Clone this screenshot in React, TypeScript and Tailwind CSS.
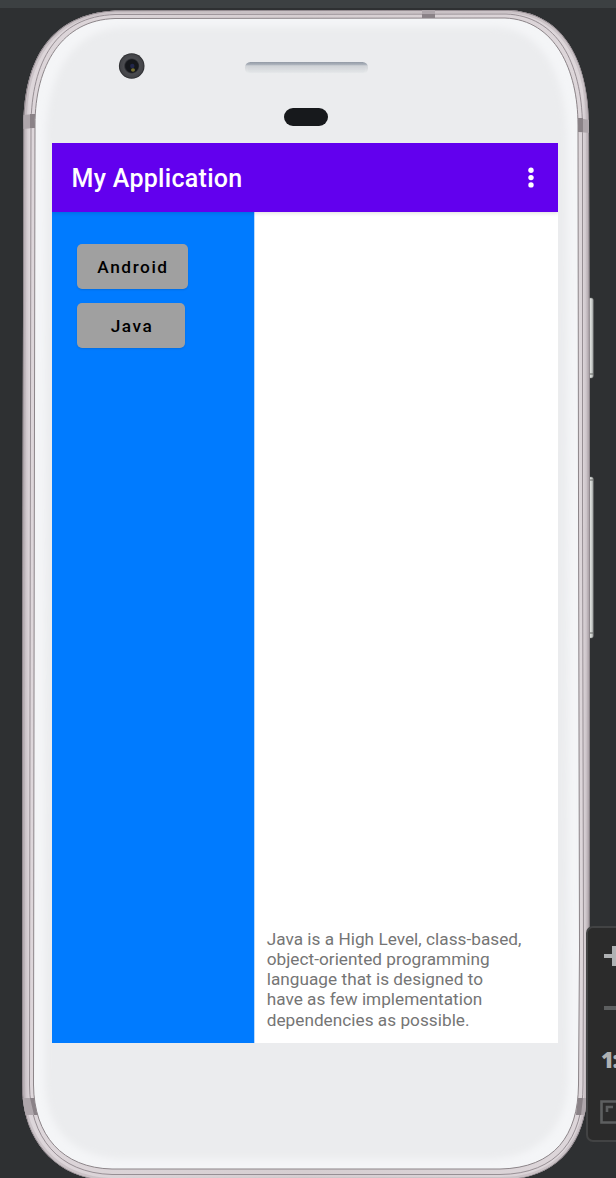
import React from "react";

const OUTER =
  "M23.5 125 C24 60 50 14 115 10.5 L508 10 C560 12 587 55 589 120 L590 500 L589.5 950 L587.5 1085 C588 1140 560 1180 500 1180 L110 1181 C55 1179 22 1140 22 1085 L22 700 Z";
const RIM =
  "M31 125 C31.5 62 56 16.5 115 14.5 L506 14 C557 16 581.5 62 582.5 125 L582.5 500 L583.5 950 L583 1085 C583 1138 558 1174 500 1174.5 L112 1174.5 C58 1173 30 1137 29.5 1085 L30 700 Z";
const FACE =
  "M35 125 C35 65 62 20 115 18.5 L505 18 C555 20 578 70 578 125 L578.5 500 L579.5 950 L578.5 1085 C578 1135 555 1168 500 1169 L112 1169 C62 1168 34 1135 33.5 1085 L34 700 Z";

function DeviceFrame() {
  return (
    <svg className="absolute inset-0" width="616" height="1178" viewBox="0 0 616 1178" aria-hidden="true">
      <defs>
        <linearGradient id="metal" x1="22" x2="590" y1="0" y2="0" gradientUnits="userSpaceOnUse">
          <stop offset="0" stopColor="#a39ba0" />
          <stop offset="0.006" stopColor="#cbc3c8" />
          <stop offset="0.013" stopColor="#ddd6da" />
          <stop offset="0.5" stopColor="#d6ced1" />
          <stop offset="0.987" stopColor="#ddd6da" />
          <stop offset="0.995" stopColor="#c9c1c6" />
          <stop offset="1" stopColor="#928a90" />
        </linearGradient>
        <linearGradient id="key" x1="0" x2="1" y1="0" y2="0">
          <stop offset="0" stopColor="#9b9d9c" />
          <stop offset="0.5" stopColor="#dfe2df" />
          <stop offset="1" stopColor="#a5a8a7" />
        </linearGradient>
        <linearGradient id="speaker" x1="0" x2="0" y1="0" y2="1">
          <stop offset="0" stopColor="#929aa5" />
          <stop offset="0.22" stopColor="#adb3bc" />
          <stop offset="0.32" stopColor="#d0d3d7" />
          <stop offset="1" stopColor="#eceeef" />
        </linearGradient>
        <pattern id="mesh" width="2" height="2" patternUnits="userSpaceOnUse">
          <circle cx="1" cy="1" r="0.5" fill="#c0c4c8" />
        </pattern>
        <radialGradient id="lens">
          <stop offset="0" stopColor="#11131b" />
          <stop offset="0.5" stopColor="#202126" />
          <stop offset="0.62" stopColor="#4b4c50" />
          <stop offset="0.88" stopColor="#434448" />
          <stop offset="1" stopColor="#252629" />
        </radialGradient>
        <filter id="soft" x="-5%" y="-5%" width="110%" height="110%">
          <feGaussianBlur stdDeviation="3.5" />
        </filter>
        <clipPath id="outerClip"><path d={OUTER} /></clipPath>
        <clipPath id="faceClip"><path d={FACE} /></clipPath>
      </defs>
      <rect x="588" y="298" width="5.3" height="80" rx="2" fill="url(#key)" stroke="#777979" strokeWidth="0.5" />
      <rect x="588" y="477" width="5.3" height="161" rx="2" fill="url(#key)" stroke="#777979" strokeWidth="0.5" />
      <path d="M589 480h4M589 633h4M589 374h4" stroke="#646665" strokeWidth="1" />
      <path d={OUTER} fill="url(#metal)" />
      <g clipPath="url(#outerClip)">
        <path d={OUTER} fill="none" stroke="#b5adb2" strokeWidth="6" opacity="0.45" />
        <path d={OUTER} fill="none" stroke="#8b8288" strokeWidth="1.4" />
        <path d={RIM} fill="none" stroke="#8f878c" strokeWidth="0.9" />
        <path d="M22 115l12-1v14l-12 1zM578 118l12 2v13l-12-1zM422 9h13v9h-13zM22 1098h12l4 17H22zM578 1098h13v17h-15z" fill="#aea6ab" />
        <path d="M30 114h5v14h-5zM578 118h5v14h-5zM422 14h13v4h-13zM30 1098h5l3 17h-4zM578 1098h5l-2 17h-5z" fill="#8a8287" />
      </g>
      <path d={FACE} fill="#f4f5f7" stroke="#8c8589" strokeWidth="1" />
      <g clipPath="url(#faceClip)">
        <path
          filter="url(#soft)"
          fill="#ebecee"
          d="M46 140 C46 75 72 29 125 27 L495 27 C545 29 566 80 567 135 L568 1080 C567 1127 540 1157 492 1159 L120 1159 C72 1157 45 1128 45 1080Z"
        />
      </g>
      <circle cx="131.7" cy="66" r="12.8" fill="url(#lens)" />
      <circle cx="132" cy="66" r="6.5" fill="#15171b" />
      <circle cx="132.3" cy="66" r="2.2" fill="#22274a" />
      <ellipse cx="133" cy="70" rx="2" ry="1.8" fill="#77702f" />
      <rect x="245" y="62" width="123" height="12" rx="5.5" fill="url(#speaker)" />
      <rect x="248" y="66" width="117" height="7" rx="3" fill="url(#mesh)" opacity="0.5" />
      <rect x="284" y="108" width="44" height="18" rx="9" fill="#17191c" />
    </svg>
  );
}

function AppBar() {
  return (
    <header className="relative z-10 flex h-[69px] shrink-0 items-center justify-between bg-[#6200ee] pl-[19.5px] pr-[24px] shadow-[0_1px_4px_rgba(0,0,0,0.14)]">
      <h1 className="pt-px text-[25px] font-medium leading-none tracking-[0.3px] text-white">My Application</h1>
      <button aria-label="More options">
        <svg width="6" height="22" viewBox="0 0 6 22" fill="#fff">
          <circle cx="3" cy="3.2" r="2.7" />
          <circle cx="3" cy="10.6" r="2.7" />
          <circle cx="3" cy="17.9" r="2.7" />
        </svg>
      </button>
    </header>
  );
}

function Screen() {
  return (
    <main className="relative flex h-[900px] w-[506px] flex-col overflow-hidden bg-white">
      <AppBar />
      <div className="flex flex-1">
        <nav className="flex w-[202.4px] shrink-0 flex-col items-start gap-[14px] bg-[#007bff] pl-[25px] pt-[32px]">
          <button className="h-[45px] w-[111px] rounded-[5px] bg-[#a0a0a0] pl-[1px] pt-[3px] text-[17.3px] font-medium tracking-[1.54px] text-black shadow-[0_1px_2px_rgba(0,0,0,0.12)]">
            Android
          </button>
          <button className="h-[45px] w-[108px] rounded-[5px] bg-[#a0a0a0] pl-[2px] pt-[3px] text-[17.3px] font-medium tracking-[1.54px] text-black shadow-[0_1px_2px_rgba(0,0,0,0.12)]">
            Java
          </button>
        </nav>
        <section className="flex flex-1 items-end border-l border-[#b9d9fb] pb-[13.4px] pl-[11.3px]">
          <p className="whitespace-nowrap text-[17.2px] leading-[20.1px] tracking-[0.03px] text-[#757575]">
            Java is a High Level, class-based,<br />
            object-oriented programming<br />
            language that is designed to<br />
            have as few implementation<br />
            dependencies as possible.
          </p>
        </section>
      </div>
    </main>
  );
}

function ZoomControls() {
  return (
    <aside className="absolute left-[586px] top-[926px] h-[216px] w-[52px] rounded-[7px] border-2 border-[#424344] bg-[#2b2b2b] text-[#afb1b3]">
      <div className="flex flex-col items-start pl-[12px] pt-[18px]">
        <svg width="20" height="20" viewBox="0 0 20 20" aria-label="Zoom in">
          <path d="M4 10h16M14 0v20" stroke="#afb1b3" strokeWidth="4" />
        </svg>
        <svg className="mt-[40px]" width="20" height="4" viewBox="0 0 20 4" aria-label="Zoom out">
          <path d="M4 2h16" stroke="#5d5f60" strokeWidth="4" />
        </svg>
        <span className="mt-[39px] h-[20px] pl-px font-['Open_Sans',sans-serif] text-[22px] font-extrabold leading-[20px] tracking-[-1.5px]">1:</span>
        <svg className="mt-[31px]" width="24" height="24" viewBox="0 0 24 24" fill="none" aria-label="Zoom to fit">
          <path d="M24 1.5H1.5v21H24M7 12V7h6" stroke="#5d5f60" strokeWidth="2.6" />
        </svg>
      </div>
    </aside>
  );
}

export default function App() {
  return (
    <div className="relative h-[1178px] w-[616px] overflow-hidden bg-[#2e3032] font-['Roboto',sans-serif]">
      <div className="h-2 bg-[#3c4042]" />
      <DeviceFrame />
      <div className="pl-[52px] pt-[135px]">
        <Screen />
      </div>
      <ZoomControls />
    </div>
  );
}
